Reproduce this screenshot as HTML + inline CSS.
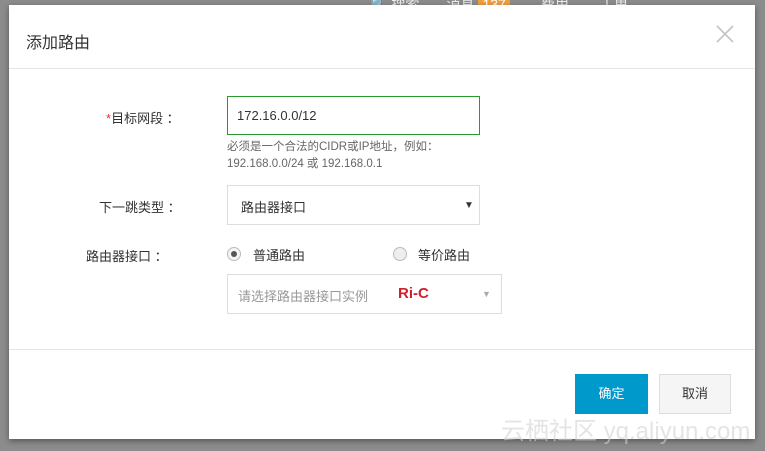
<!DOCTYPE html>
<html><head><style>
body{margin:0;width:765px;height:451px;background:#8c8c8c;position:relative;overflow:hidden;font-family:"Liberation Sans","Noto Sans CJK SC",sans-serif;font-size:13px;color:#333}
.a{position:absolute}
.dlg{left:9px;top:5px;width:746px;height:434px;background:#fff;box-shadow:0 2px 6px rgba(0,0,0,.4)}
.lab{color:#333;font-size:13px}
.box{border:1px solid #ddd;background:#fff}
</style></head><body>
<div class="a" style="left:370px;top:-6px;color:#eee;font-size:14px">🔍 搜索 &nbsp;&nbsp;&nbsp;&nbsp;&nbsp; 消息 <span style="background:#f0a040;color:#fff;padding:0 4px">137</span> &nbsp;&nbsp;&nbsp;&nbsp;&nbsp;&nbsp; 费用 &nbsp;&nbsp;&nbsp;&nbsp;&nbsp;&nbsp; 工单</div>
<div class="a dlg">
 <div class="a" style="left:17px;top:24px;font-size:16px;color:#333">添加路由</div>
 <svg class="a" style="left:706px;top:19px" width="20" height="20"><path d="M2 2L18 18M18 2L2 18" stroke="#c4c4c4" stroke-width="1.6"/></svg>
 <div class="a" style="left:0;top:63px;width:746px;height:1px;background:#e5e5e5"></div>
 <div class="a lab" style="left:97px;top:103px"><span style="color:#e4393c">*</span>目标网段 ：</div>
 <div class="a" style="left:218px;top:91px;width:251px;height:37px;border:1px solid #2a9a2a;background:#fff"><span class="a" style="left:9px;top:11px;font-size:13px">172.16.0.0/12</span></div>
 <div class="a" style="left:218px;top:134px;font-size:11.5px;color:#666;line-height:17px">必须是一个合法的CIDR或IP地址，例如：<br>192.168.0.0/24 或 192.168.0.1</div>
 <div class="a lab" style="left:90px;top:192px">下一跳类型 ：</div>
 <div class="a box" style="left:218px;top:180px;width:251px;height:38px"><span class="a" style="left:13px;top:11px">路由器接口</span><span class="a" style="left:236px;top:14px;font-size:10px">▼</span></div>
 <div class="a lab" style="left:77px;top:241px">路由器接口 ：</div>
 <div class="a" style="left:218px;top:242px;width:12px;height:12px;border:1px solid #bbb;border-radius:50%;background:#f4f4f4"><div class="a" style="left:3px;top:3px;width:6px;height:6px;border-radius:50%;background:#555"></div></div>
 <div class="a lab" style="left:244px;top:240px">普通路由</div>
 <div class="a" style="left:384px;top:242px;width:12px;height:12px;border:1px solid #bbb;border-radius:50%;background:#eee"></div>
 <div class="a lab" style="left:409px;top:240px">等价路由</div>
 <div class="a box" style="left:218px;top:269px;width:273px;height:38px"><span class="a" style="left:10px;top:11px;color:#999">请选择路由器接口实例</span><span class="a" style="left:170px;top:10px;color:#d0202a;font-weight:bold;font-size:15px">Ri-C</span><span class="a" style="left:254px;top:14px;font-size:9px;color:#aaa">▼</span></div>
 <div class="a" style="left:0;top:344px;width:746px;height:1px;background:#e5e5e5"></div>
 <div class="a" style="left:566px;top:369px;width:73px;height:40px;background:#0099cc;color:#fff;text-align:center;line-height:40px">确定</div>
 <div class="a" style="left:650px;top:369px;width:70px;height:38px;border:1px solid #ddd;background:#f5f5f5;text-align:center;line-height:38px">取消</div>
 <div class="a" style="left:492px;top:406px;font-size:24px;color:rgba(210,210,210,.6)">云栖社区 yq.aliyun.com</div>
</div>
</body></html>
